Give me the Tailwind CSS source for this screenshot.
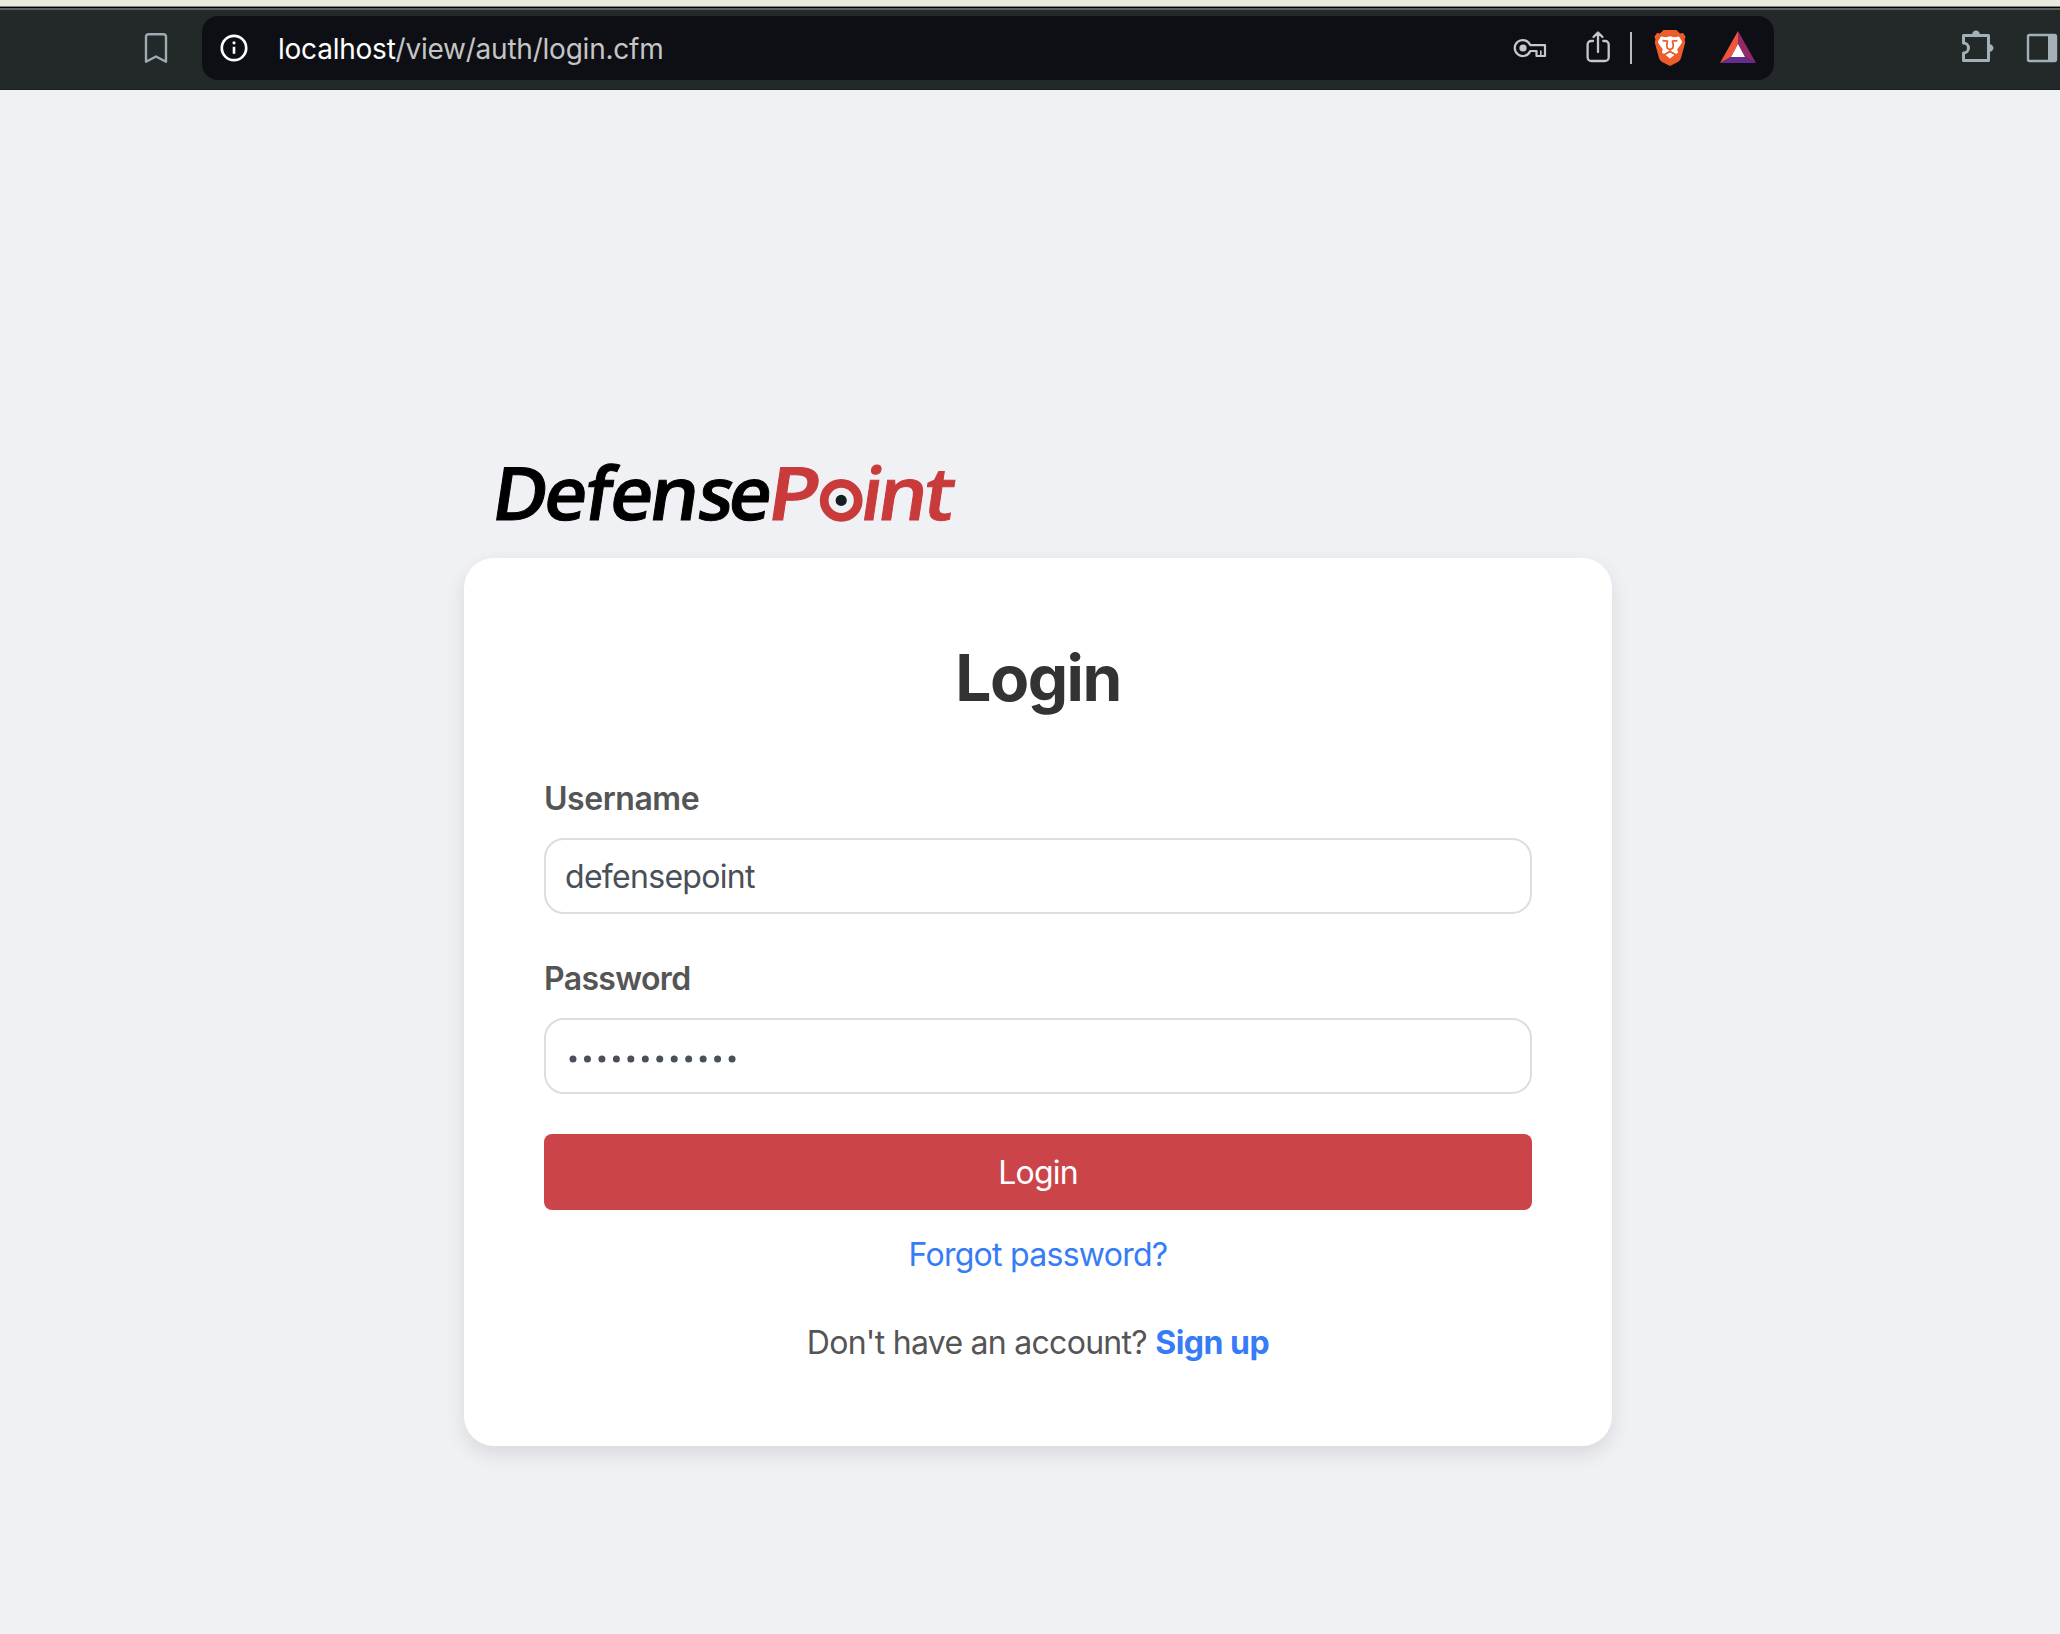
<!DOCTYPE html>
<html lang="en">
<head>
<meta charset="utf-8">
<title>Login</title>
<script src="https://cdn.jsdelivr.net/npm/@tailwindcss/browser@4"></script>
</head>
<body class="font-['Inter',sans-serif] bg-[#f0f1f5] w-[2060px] h-[1634px] overflow-hidden flex flex-col">
<header class="shrink-0">
  <div class="h-[6px] bg-[#ebeae1]"></div>
  <div class="h-px bg-[#7d8481]"></div>
  <div class="h-px bg-black"></div>
  <div class="h-[2px] bg-[#566062]"></div>
  <div class="h-[80px] bg-[#232829] border-b border-[#1c1f24] flex items-start pt-[6px]">
    <svg class="ml-[142px] mt-[14px] w-7 h-9 shrink-0" viewBox="0 0 28 36" fill="none" stroke="#9dabb3" stroke-width="2.4" stroke-linejoin="round"><path d="M4 6.800a2.600 2.600 0 0 1 2.600-2.600h14.800a2.600 2.600 0 0 1 2.600 2.600V31.800l-10-5.300L4 31.800z"/></svg>
    <div class="ml-8 w-[1572px] h-16 shrink-0 rounded-2xl bg-[#0e0f14] flex items-center">
      <svg class="ml-[18px] w-7 h-7 shrink-0" viewBox="0 0 28 28" fill="none" stroke="#fff"><circle cx="14" cy="14" r="12.200" stroke-width="2.700"/><path d="M14 12.800v7" stroke-width="2.600"/><circle cx="14" cy="8.800" r="1.600" fill="#fff" stroke="none"/></svg>
      <div class="ml-[30px] pt-px text-[28px] leading-8 tracking-[-0.23px] whitespace-nowrap text-[#c5c5c6]"><span class="text-white">localhost</span>/view/auth/login.cfm</div>
      <div class="ml-auto flex items-center h-16">
        <svg class="w-[40px] h-16" viewBox="1510 16 40 64" fill="none" stroke="#c5c7c8" stroke-width="2.200" stroke-linejoin="round"><path d="M1530.200 45.200H1545v10.800h-8.500v-5h-6.300a8 8 0 1 1 0-5.800z"/><path d="M1540.800 50.500v5" stroke-width="1.600"/><circle cx="1523" cy="48" r="3.600" fill="#c5c7c8" stroke="none"/></svg>
        <svg class="w-[40px] h-16 ml-[28px]" viewBox="1578 16 40 64" fill="none" stroke="#c5c7c8" stroke-width="2.300" stroke-linecap="round" stroke-linejoin="round"><path d="M1593 41h-2a3.400 3.400 0 0 0-3.400 3.400v12.800a3.800 3.800 0 0 0 3.800 3.800h13.500a3.800 3.800 0 0 0 3.800-3.800V44.400a3.400 3.400 0 0 0-3.400-3.400h-2M1598 52V33M1593.500 37l4.500-4.500 4.500 4.500"/></svg>
        <div class="ml-[12px] w-[2px] h-8 bg-[#b9bbbd]"></div>
        <svg class="w-[40px] h-16 ml-[18px]" viewBox="1650 16 40 64"><path fill="#ed5c2b" d="M1663.500 30h13l3.500 3.400 3-.4 2.600 3.700-1 2.600.6 3.400-4.200 15.400c-.4 1.500-1.300 2.700-2.600 3.600L1670 66l-8.400-4.300c-1.300-.9-2.200-2.100-2.600-3.600L1654.800 42.700l.6-3.400-1-2.600L1657 33l3 .4z"/><path fill="#fff" d="M1661 36.500l5 .8 4-1 4 1 5-.8 3.200 5.200-1.200 2.600-3.800 5 .9 3.200-2.100 1.500-6-3.500-6 3.500-2.100-1.500.9-3.200-3.800-5-1.200-2.600z"/><path fill="#fff" d="M1665 54.400l5-3 5 3-5 4.100z"/><path fill="none" stroke="#ed5c2b" stroke-width="1.700" stroke-linejoin="round" d="M1662.500 40.600l5 .6-.8 3.800.6 3.300 2.700 1.500 2.700-1.500.6-3.300-.8-3.800 5-.6M1670 49.800v2.400M1664.800 54.600l5.200-3 5.200 3"/></svg>
        <svg class="w-[40px] h-16 ml-[28px] mr-[16px]" viewBox="1718 16 40 64"><path fill="#f2543a" d="M1738 31v13l-7 13-11 6z"/><path fill="#94296a" d="M1738 31v13l7 13 11 6z"/><path fill="#662d91" d="M1720 63l11-6h14l11 6z"/><path fill="#fff" d="M1738 44l7 13h-14z"/></svg>
      </div>
    </div>
    <svg class="w-10 h-16 ml-[184px] shrink-0" viewBox="1958 16 40 64"><path fill="none" stroke="#a3b0b7" stroke-width="3" stroke-linejoin="round" d="M1963.500 35.500h25v25h-25V53a5 5 0 0 0 0-10z"/><path fill="#a3b0b7" d="M1972 35a4 4.500 0 0 1 8 0zM1989 44a4.500 4 0 0 1 0 8z"/></svg>
    <svg class="w-[36px] h-16 ml-[26px] shrink-0" viewBox="2024 16 36 64"><rect x="2028" y="35" width="28" height="26" rx="1.500" fill="none" stroke="#a3b0b7" stroke-width="2.400"/><path fill="#a3b0b7" d="M2048 35h8v26h-8z"/></svg>
  </div>
</header>
<main class="pl-[464px] pt-[360px]">
  <svg class="w-[520px] h-[108px] overflow-visible" viewBox="464 450 520 108" font-family="'Open Sans','Noto Sans',sans-serif" font-weight="600" font-size="73.500">
    <g fill="#000" stroke="#000" stroke-width="1" transform="translate(0 519.500) skewX(-8.500)">
      <text transform="translate(489.500) scale(1.03 1)">D</text>
      <text transform="translate(541.500) scale(1.01 1)">e</text>
      <text transform="translate(582.500) scale(.98 1)">f</text>
      <text transform="translate(607.500) scale(1.01 1)">e</text>
      <text transform="translate(647) scale(1.05 1)">n</text>
      <text transform="translate(695.500) scale(.97 1)">s</text>
      <text transform="translate(726) scale(1.01 1)">e</text>
    </g>
    <g fill="#c93a3b" stroke="#c93a3b" stroke-width="1" transform="translate(0 519.500) skewX(-8.500)">
      <text transform="translate(765) scale(1.14 1)">P</text>
      <text transform="translate(858.500)">i</text>
      <text transform="translate(875.500) scale(1.05 1)">n</text>
      <text transform="translate(921) scale(1.05 1)">t</text>
    </g>
    <circle cx="841.200" cy="500.400" r="17" fill="none" stroke="#c93a3b" stroke-width="8.800"/>
    <circle cx="841.200" cy="500.400" r="5.600" fill="#161d20"/>
  </svg>
  <section class="w-[1148px] h-[888px] rounded-[30px] bg-white shadow-[0_8px_20px_rgba(0,0,0,0.1)] px-20 flex flex-col">
    <h1 class="self-center mt-[80px] text-[64px] leading-[80px] tracking-[-1.5px] font-bold text-[#333] whitespace-nowrap">Login</h1>
    <label class="self-start mt-[61px] text-[32px] leading-10 tracking-[-0.45px] font-semibold text-[#555]">Username</label>
    <div class="mt-[19px] h-[76px] border-2 border-[#ddd] rounded-[20px] px-[19px] pt-0.5 flex items-center text-[32px] tracking-[-0.7px] text-[#495057]">defensepoint</div>
    <label class="self-start mt-[45px] text-[32px] leading-10 tracking-[-0.65px] font-semibold text-[#555]">Password</label>
    <div class="mt-[19px] h-[76px] border-2 border-[#ddd] rounded-[20px] pl-[23px] pt-[5px] flex items-center"><svg class="w-[168px] h-2" viewBox="0 0 168 8"><path d="M4 4h159.100" fill="none" stroke="#495057" stroke-width="7" stroke-linecap="round" stroke-dasharray="0 14.460"/></svg></div>
    <button class="mt-10 h-[76px] pt-0.5 rounded-lg bg-[#cb444a] text-white text-[32px] tracking-[-0.8px]">Login</button>
    <a class="self-center mt-[25px] text-[32px] leading-10 tracking-[-0.73px] text-[#367cf7]">Forgot password?</a>
    <p class="self-center mt-[48px] text-[32px] leading-10 tracking-[-0.72px] text-[#555] whitespace-pre">Don't have an account? <a class="font-bold tracking-[-0.5px] text-[#367cf7]">Sign up</a></p>
  </section>
</main>
</body>
</html>
